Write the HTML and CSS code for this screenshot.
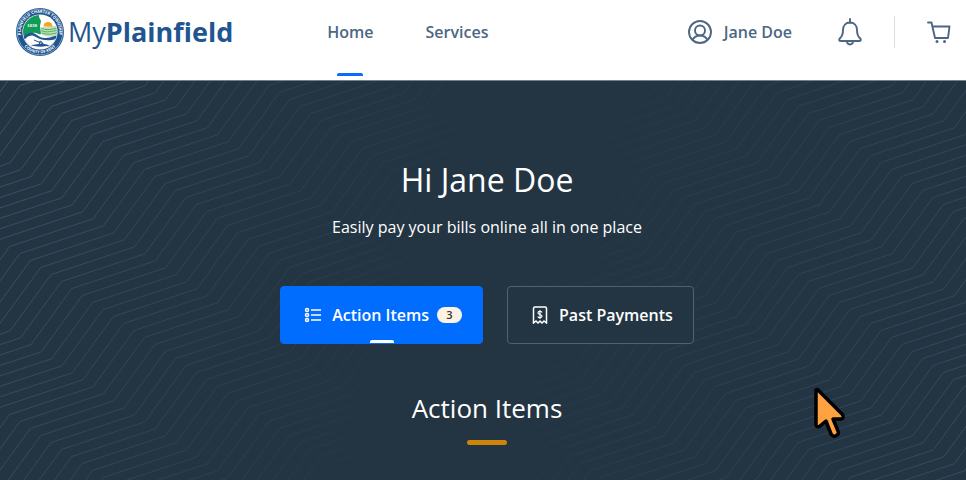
FILE: index.html
```html
<!DOCTYPE html>
<html lang="en">
  <head>
    <meta charset="utf-8" />
    <meta name="viewport" content="width=device-width, initial-scale=1.0" />
    <title>MyPlainfield</title>
    <link rel="stylesheet" href="styles.css" />
  </head>

  <body>
    <header class="header">
      <a class="logo" href="#">
        <svg class="seal" viewBox="0 0 48 48" aria-hidden="true">
          <defs>
            <path id="seal-top" d="M5.6 29.5A19.2 19.2 0 1 1 42.4 29.5" />
            <path id="seal-bottom" d="M4.5 33A21.6 21.6 0 0 0 43.5 33" />
            <clipPath id="seal-clip"><circle cx="24" cy="24" r="17" /></clipPath>
          </defs>
          <circle cx="24" cy="24" r="24" fill="#1f5590" />
          <circle cx="24" cy="24" r="22.8" fill="none" stroke="#b9cde2" stroke-width=".6" />
          <circle cx="24" cy="24" r="17.6" fill="#fff" />
          <g clip-path="url(#seal-clip)">
            <path d="M6 6h17v3l2 4-1 5 1 8c-3 1-4-2-8-1-4 0-6 2-11 3z" fill="#119a58" />
            <path d="M25 20c5-2 9-2 17-2v11c-7-1-12 1-17-3z" fill="#c5e0b4" />
            <path d="M25 20c5 3 11 1 18 0M25 22.500c6 3 11 0 18 0M26 25c6 2 9 1 15 0" fill="none" stroke="#4bad67" />
            <path d="M27.500 18.500a4.500 4.500 0 0 1 9 0z" fill="#f6a31d" />
            <path d="M4 31c5-5 9-7 13-6 6 2 6 5 12 5 5 0 8-2 14-3v12H4z" fill="#1f5590" />
            <path d="M7 34c4-7 9-8 13-5 6 4 14 4 20 2l-4 12H12z" fill="#fff" />
            <path d="M15 37.500c6-2 13-2 19 0-6 1.500-13 1.500-19 0z" fill="#1f5590" />
            <path d="M18 32l14 6M23 37l1-4 2 1 1 4" fill="none" stroke="#1f5590" />
          </g>
          <text class="seal-year" x="11" y="19">1838</text>
          <text class="seal-text">
            <textPath href="#seal-top" startOffset="50%" text-anchor="middle">PLAINFIELD CHARTER TOWNSHIP</textPath>
          </text>
          <text class="seal-text">
            <textPath href="#seal-bottom" startOffset="50%" text-anchor="middle">COUNTY OF KENT</textPath>
          </text>
        </svg>
        <span class="logo-text">My<b>Plainfield</b></span>
      </a>

      <nav class="nav">
        <a class="nav-link active" href="#">Home</a>
        <a class="nav-link" href="#">Services</a>
      </nav>

      <div class="tools">
        <a class="user" href="#">
          <svg class="icon" viewBox="0 0 24 24" aria-hidden="true">
            <circle cx="12" cy="12" r="11" />
            <circle cx="12" cy="10.5" r="5" />
            <path d="M4.5 19.8c1.6-2.8 4.2-4.3 7.5-4.3s5.900 1.500 7.500 4.300" />
          </svg>
          Jane Doe
        </a>
        <button class="icon-button bell" type="button" aria-label="Notifications">
          <svg class="icon" viewBox="0 0 24 28" aria-hidden="true">
            <path d="M12 1v4M12 4.500c-4.200 0-7 3-7 7.500 0 5-1.200 6.700-3 8.300-1.400 1.300-.8 2.700.8 2.700h18.400c1.600 0 2.200-1.400.8-2.700-1.800-1.600-3-3.300-3-8.300 0-4.500-2.800-7.500-7-7.500zM9 23c0 4.600 6 4.600 6 0" />
          </svg>
        </button>
        <button class="icon-button cart" type="button" aria-label="Cart">
          <svg class="icon" viewBox="0 0 24 24" aria-hidden="true">
            <path d="M1 2.500h3.500L8 18h13l1.500-11.500H5.500" />
            <circle class="dot" cx="10" cy="21.500" r="1.500" />
            <circle class="dot" cx="17.500" cy="21.500" r="1.500" />
          </svg>
        </button>
      </div>
    </header>

    <main class="hero">
      <svg class="waves" aria-hidden="true">
        <defs>
          <path id="w1" d="M-405.400 221.500l83.500-27.700 41-56.300l83.500-27.700 41-56.300l83.500-27.700 41-56.300l83.500-27.700 41-56.300l83.500-27.700 41-56.300l83.500-27.700 41-56.300" />
          <g id="w2"><use href="#w1" /><use href="#w1" x="10.375" y="7" /></g>
          <g id="w4"><use href="#w2" /><use href="#w2" x="20.750" y="14" /></g>
          <g id="w8"><use href="#w4" /><use href="#w4" x="41.500" y="28" /></g>
          <g id="w16"><use href="#w8" /><use href="#w8" x="83" y="56" /></g>
          <pattern id="zigzag" width="249" height="168" patternUnits="userSpaceOnUse">
            <g class="wave-line"><use href="#w16" /><use href="#w16" x="166" y="112" /></g>
          </pattern>
        </defs>
        <rect width="100%" height="100%" fill="url(#zigzag)" />
      </svg>

      <div class="content">
        <h1 class="title">Hi Jane Doe</h1>
        <p class="subtitle">Easily pay your bills online all in one place</p>

        <div class="tabs">
          <button class="tab selected" type="button">
            <svg class="tab-icon" viewBox="0 0 18 18" aria-hidden="true">
              <circle cx="3" cy="4" r="1.500" />
              <circle cx="3" cy="9" r="1.500" />
              <circle cx="3" cy="14" r="1.500" />
              <path d="M7 4h10M7 9h10M7 14h10" />
            </svg>
            <span>Action Items</span>
            <span class="badge">3</span>
          </button>
          <button class="tab" type="button">
            <svg class="tab-icon" viewBox="0 0 18 18" aria-hidden="true">
              <path d="M2.500 17V2.500q0-1.500 1.500-1.500h10q1.500 0 1.500 1.500V17l-2.500-2-2 2-2-2-2 2-2-2z" />
              <path class="dollar" d="M11 6.500C10.500 4.800 7 4.800 7 6.900s4 1.200 4 3.200-3.500 2.200-4.200.4M9 4v9" />
            </svg>
            <span>Past Payments</span>
          </button>
        </div>

        <h2 class="section-title">Action Items</h2>
      </div>

      <svg class="cursor" viewBox="0 0 36 56" aria-hidden="true">
        <path d="M5 4v35q1 3 4 1l6-5 5 13q3 4 6 1 2-1 1-4l-5-12h8q4-1 1-5L7 4q-1-1-2 0z" />
      </svg>
    </main>
  </body>
</html>
```
FILE: styles.css
```css
* {
  box-sizing: border-box;
}

body {
  display: flex;
  flex-direction: column;
  min-height: 100vh;
  margin: 0;
  color: #fff;
  font-family: "Open Sans", sans-serif;
  font-size: 16px;
  line-height: 24px;
}

a {
  color: inherit;
  text-decoration: none;
}

button {
  color: inherit;
  font: inherit;
  background: none;
  border: 0;
  cursor: pointer;
}

.header {
  display: flex;
  align-items: center;
  padding: 8px 15px 24px 16px;
  color: #4c6783;
  font-weight: 600;
  background: #fff;
}

.logo {
  display: flex;
  gap: 4px;
  align-items: center;
  color: #1f5590;
}

.seal {
  width: 48px;
  height: 48px;
}

.seal-text {
  fill: #fff;
  font-size: 4px;
  font-weight: 700;
}

.seal-year {
  fill: #fff;
  font-family: "Liberation Serif", serif;
  font-size: 5px;
  font-weight: 700;
}

.logo-text {
  font-size: 27px;
  font-weight: 400;
  line-height: 48px;
}

.nav {
  display: flex;
  gap: 52px;
  margin-left: 94px;
}

.nav-link {
  position: relative;
}

.nav-link.active::after {
  position: absolute;
  bottom: -32px;
  left: 50%;
  width: 26px;
  height: 3px;
  margin-left: -13px;
  background: #0a6cff;
  border-radius: 2px 2px 0 0;
  content: "";
}

.tools {
  display: flex;
  align-items: center;
  margin-left: auto;
}

.user {
  display: flex;
  gap: 12px;
  align-items: center;
}

.icon {
  display: block;
  width: 24px;
  height: 24px;
  fill: none;
  stroke: currentColor;
  stroke-width: 1.9;
  stroke-linecap: round;
  stroke-linejoin: round;
}

.icon .dot {
  fill: currentColor;
  stroke: none;
}

.icon-button {
  padding: 0;
}

.bell {
  margin: 0 32px 0 46px;
}

.bell .icon {
  height: 28px;
}

.cart {
  padding: 4px 0 4px 32px;
  border-left: 1px solid #d5dfe8;
}

.hero {
  position: relative;
  flex: 1;
  padding: 75px 0 32px 8px;
  overflow: hidden;
  background: #233543;
  border-top: 1px solid #71828a;
}

.waves {
  position: absolute;
  inset: 0;
  width: 100%;
  height: 100%;
}

.wave-line {
  fill: none;
  stroke: #3a5069;
}

/* fades the lines out behind the text */
.hero::before {
  position: absolute;
  z-index: 1;
  inset: 0;
  background: linear-gradient(107deg, #23354300, #233543 48%, #233543 52%, #23354333);
  content: "";
}

.content {
  position: relative;
  z-index: 2;
  text-align: center;
}

.title {
  margin: 0;
  font-size: 32px;
  font-weight: 400;
  line-height: 48px;
}

.subtitle {
  margin: 11px 0 47px;
}

.tabs {
  display: flex;
  gap: 24px;
  justify-content: center;
}

.tab {
  position: relative;
  display: flex;
  align-items: center;
  padding: 16px 20px 16px 23px;
  font-weight: 600;
  background: #233543;
  border: 1px solid #4d6276;
  border-radius: 4px;
}

.tab.selected {
  background: #006dff;
  border-color: #006dff;
}

.tab.selected::after {
  position: absolute;
  bottom: 0;
  left: 50%;
  width: 24px;
  height: 3px;
  margin-left: -12px;
  background: #fff;
  border-radius: 2px 2px 0 0;
  content: "";
}

.tab-icon {
  width: 18px;
  height: 18px;
  margin-right: 10px;
  fill: none;
  stroke: currentColor;
  stroke-width: 1.5;
}

.tab-icon .dollar {
  stroke-width: 1.2;
}

.badge {
  width: 25px;
  margin-left: 8px;
  color: #333;
  font-size: 11px;
  line-height: 16px;
  background: #fdf3e4;
  border-radius: 8px;
}

.section-title {
  margin: 44px 0 0;
  font-size: 26px;
  font-weight: 400;
  line-height: 40px;
}

.section-title::after {
  display: block;
  width: 40px;
  height: 5px;
  margin: 12px auto 0;
  background: #cc8409;
  border-radius: 3px;
  content: "";
}

.cursor {
  position: absolute;
  z-index: 3;
  top: 305px;
  left: 84%;
  width: 36px;
  height: 56px;
  fill: #ffa23f;
  stroke: #000;
  stroke-width: 3.5;
  stroke-linejoin: round;
}
```
